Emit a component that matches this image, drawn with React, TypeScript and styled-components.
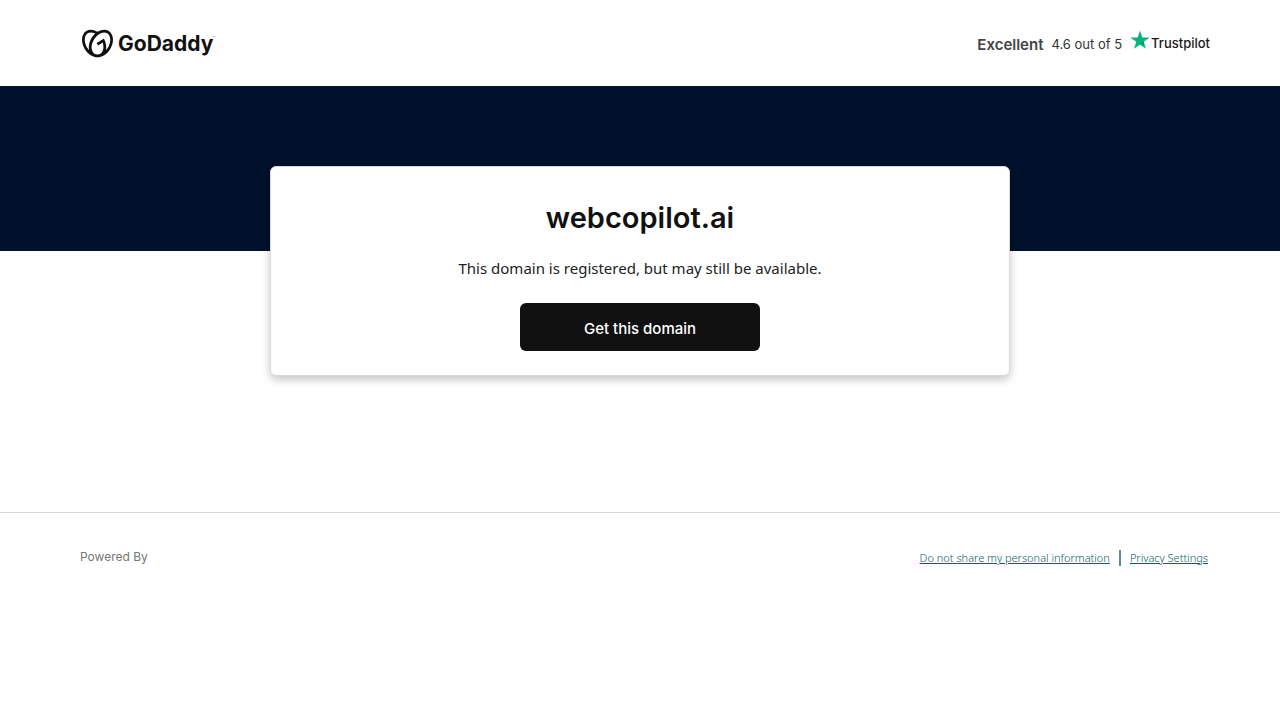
import React from 'react';
import styled, { createGlobalStyle } from 'styled-components';
import { SiGodaddy } from 'react-icons/si';

const GlobalStyle = createGlobalStyle`
  *, *::before, *::after { box-sizing: border-box; }
  body {
    margin: 0;
    background: #fff;
    color: #111;
    font-family: Inter, "Liberation Sans", sans-serif;
    font-size: 16px;
  }
  h1, p { margin: 0; }
`;

const Header = styled.header`
  display: flex;
  align-items: center;
  justify-content: space-between;
  height: 86px;
  padding: 0 70px 0 82px;
`;

const Brand = styled.a`
  display: flex;
  align-items: center;
  gap: 5px;
  color: #111;
  text-decoration: none;
`;

const BrandName = styled.span`
  padding-top: 2px;
  font-size: 21px;
  line-height: 28px;
  font-weight: 700;
  font-family: Inter, sans-serif;
`;

const BrandMark = styled.sup`
  align-self: flex-start;
  margin-left: -5px;
  font-size: 3px;
  line-height: 20px;
`;

const Rating = styled.div`
  display: flex;
  align-items: center;
  gap: 8px;
  padding-top: 2px;
  color: #333;
`;

const Verdict = styled.strong`
  padding-top: 2px;
  font-size: 15px;
  line-height: 20px;
  font-weight: 600;
  color: #444;
`;

const Score = styled.span`
  font-size: 13px;
  line-height: 20px;
`;

const Trustpilot = styled.a`
  display: flex;
  align-items: center;
  gap: 1px;
  padding-bottom: 2px;
  color: #191919;
  font-size: 13px;
  font-weight: 500;
  line-height: 20px;
  text-decoration: none;
`;

const Star = styled.svg`
  width: 20px;
  height: 20px;
  margin-bottom: 6px;
`;

const Hero = styled.section`
  display: flex;
  justify-content: center;
  padding: 80px 24px 0;
  background: linear-gradient(#00112c, #00112c) top / 100% 165px no-repeat;
`;

const Card = styled.div`
  display: flex;
  flex-direction: column;
  align-items: center;
  width: 100%;
  max-width: 740px;
  padding: 31px 24px 24px;
  border: 1px solid #d9d9d9;
  border-radius: 6px;
  background: #fff;
  box-shadow: 0 4px 8px rgba(0, 0, 0, 0.22);
  text-align: center;
`;

const Domain = styled.h1`
  font-size: 29px;
  line-height: 40px;
  font-weight: 600;
`;

const Message = styled.p`
  margin-top: 18px;
  color: #222;
  font-family: "Noto Sans", sans-serif;
  font-size: 15px;
  line-height: 24px;
`;

const GetButton = styled.button`
  width: 240px;
  max-width: 100%;
  height: 48px;
  margin-top: 23px;
  padding: 4px 0 0;
  border: 0;
  border-radius: 6px;
  background: #111;
  color: #fff;
  font: 500 15px/24px Inter, sans-serif;
`;

const Footer = styled.footer`
  display: flex;
  align-items: center;
  justify-content: space-between;
  margin-top: 136px;
  padding: 34px 72px 0 80px;
  border-top: 1px solid #d6d6d6;
`;

const Powered = styled.span`
  color: #767676;
  font-size: 12px;
  line-height: 20px;
`;

const LinkRow = styled.nav`
  display: flex;
  align-items: center;
  padding-top: 2px;
`;

const FooterLink = styled.a`
  color: #00626a;
  font-family: "Noto Sans", sans-serif;
  font-size: 11px;
  font-weight: 300;
  line-height: 16px;
`;

const Divider = styled.span`
  width: 2px;
  height: 16px;
  margin: 0 9px;
  background: #5d8f92;
`;

export default function App() {
  return (
    <>
      <GlobalStyle />
      <Header>
        <Brand href="#" aria-label="GoDaddy">
          <SiGodaddy size={31} />
          <BrandName>GoDaddy</BrandName>
          <BrandMark>™</BrandMark>
        </Brand>
        <Rating>
          <Verdict>Excellent</Verdict>
          <Score>4.6 out of 5</Score>
          <Trustpilot href="#">
            <Star viewBox="0 0 20 20" aria-hidden="true">
              <path fill="#00b67a" d="M10 .5l2.3 7h7.4l-6 4.3 2.3 7-6-4.3-6 4.3 2.3-7-6-4.3h7.4z" />
              <path fill="#008a55" d="M14.2 13.3l-.5-1.5L10 14.5z" />
            </Star>
            Trustpilot
          </Trustpilot>
        </Rating>
      </Header>
      <main>
        <Hero>
          <Card>
            <Domain>webcopilot.ai</Domain>
            <Message>This domain is registered, but may still be available.</Message>
            <GetButton type="button">Get this domain</GetButton>
          </Card>
        </Hero>
      </main>
      <Footer>
        <Powered>Powered By</Powered>
        <LinkRow aria-label="Privacy">
          <FooterLink href="#">Do not share my personal information</FooterLink>
          <Divider />
          <FooterLink href="#">Privacy Settings</FooterLink>
        </LinkRow>
      </Footer>
    </>
  );
}
